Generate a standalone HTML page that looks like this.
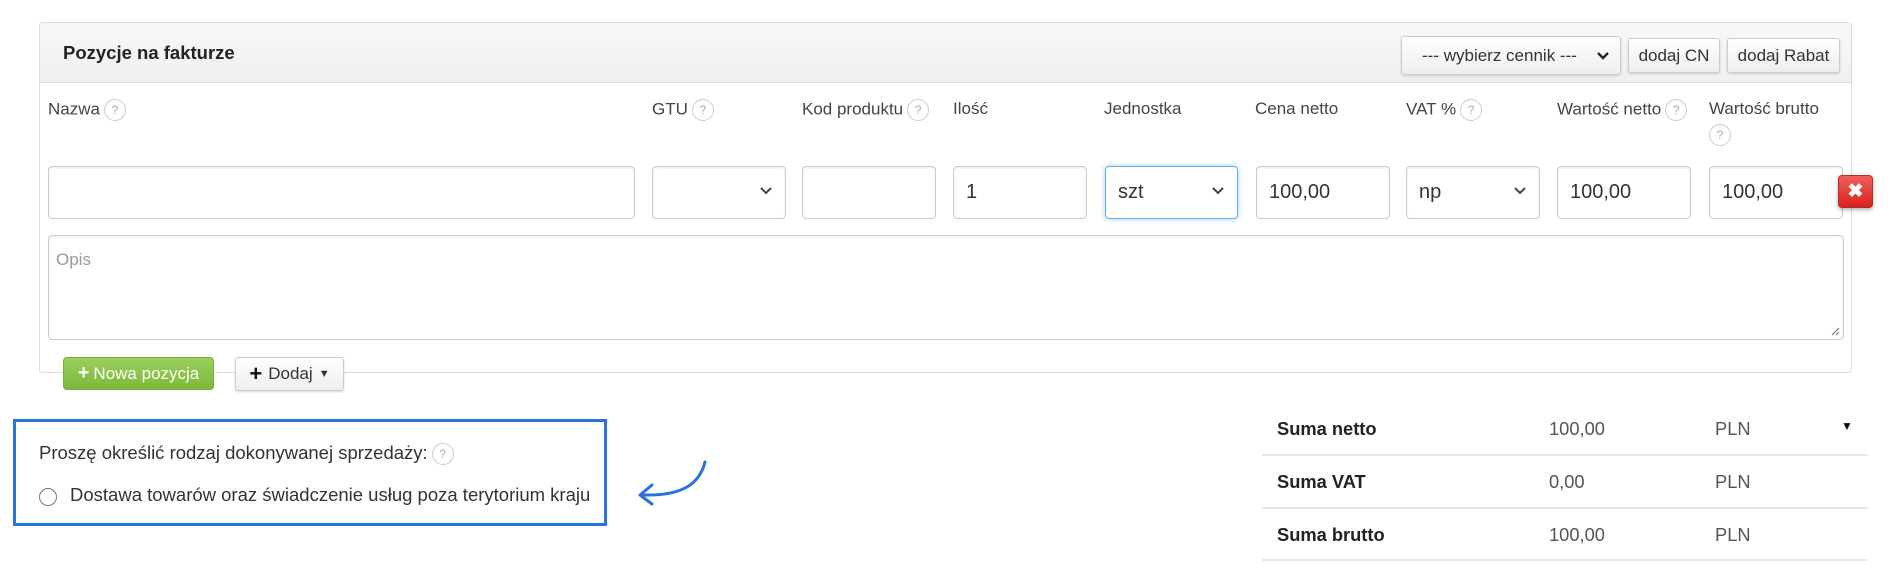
<!DOCTYPE html>
<html><head><meta charset="utf-8"><style>
*{box-sizing:border-box}
body{margin:0;width:1892px;height:576px;background:#fff;font-family:"Liberation Sans",Arial,sans-serif;color:#333;position:relative;overflow:hidden}
.a{position:absolute}
.panel{left:39px;top:22px;width:1813px;height:351px;border:1px solid #ddd;border-radius:3px}
.hdr{left:40px;top:23px;width:1811px;height:60px;background:linear-gradient(#f8f8f8,#efefef);border-bottom:1px solid #ddd}
.btn{background:linear-gradient(#fff,#eee);border:1px solid #ccc;border-radius:3px;box-shadow:0 1px 2px rgba(0,0,0,.15);font-size:17px;color:#333;display:flex;align-items:center;justify-content:center}
.lbl{font-size:17px;color:#444;top:99px}
.q{display:inline-block;width:22px;height:22px;border:1px solid #ccc;border-radius:50%;font-size:12px;color:#aaa;text-align:center;line-height:20px;vertical-align:middle;margin-left:4px}
.in{top:166px;height:53px;border:1px solid #ccc;border-radius:4px;box-shadow:inset 0 1px 2px rgba(0,0,0,.08);font-size:20px;padding-left:12px;display:flex;align-items:center;color:#333}
.chev{position:absolute;right:12px;top:19px;width:14px;height:10px}
.sum{font-size:18.3px}
.line{height:2px;background:#e6e6e6;left:1262px;width:606px}
</style></head><body>
<div class="a panel"></div>
<div class="a hdr"></div>
<div class="a" style="left:63px;top:42px;font-size:18.5px;font-weight:bold;color:#222">Pozycje na fakturze</div>
<div class="a btn" style="left:1401px;top:36px;width:220px;height:39px;justify-content:flex-start;padding-left:20px">--- wybierz cennik ---<svg style="position:absolute;right:10px;top:14px" width="14" height="10" viewBox="0 0 14 10"><path d="M2 2l5 5 5-5" stroke="#222" stroke-width="2.4" fill="none"/></svg></div>
<div class="a btn" style="left:1628px;top:38px;width:92px;height:35px">dodaj CN</div>
<div class="a btn" style="left:1727px;top:38px;width:113px;height:35px">dodaj Rabat</div>

<div class="a lbl" style="left:48px">Nazwa<span class="q">?</span></div>
<div class="a lbl" style="left:652px">GTU<span class="q">?</span></div>
<div class="a lbl" style="left:802px">Kod produktu<span class="q">?</span></div>
<div class="a lbl" style="left:953px">Ilość</div>
<div class="a lbl" style="left:1104px">Jednostka</div>
<div class="a lbl" style="left:1255px">Cena netto</div>
<div class="a lbl" style="left:1406px">VAT %<span class="q">?</span></div>
<div class="a lbl" style="left:1557px">Wartość netto<span class="q">?</span></div>
<div class="a lbl" style="left:1709px">Wartość brutto</div>
<div class="a" style="left:1709px;top:124px"><span class="q" style="margin:0">?</span></div>

<div class="a in" style="left:48px;width:587px"></div>
<div class="a in" style="left:652px;width:134px"><svg class="chev" viewBox="0 0 14 10"><path d="M2 2l5 5 5-5" stroke="#444" stroke-width="2" fill="none"/></svg></div>
<div class="a in" style="left:802px;width:134px"></div>
<div class="a in" style="left:953px;width:134px">1</div>
<div class="a in" style="left:1105px;width:133px;border-color:#66afe9;box-shadow:0 0 6px rgba(102,175,233,.6)">szt<svg class="chev" viewBox="0 0 14 10"><path d="M2 2l5 5 5-5" stroke="#444" stroke-width="2" fill="none"/></svg></div>
<div class="a in" style="left:1256px;width:134px">100,00</div>
<div class="a in" style="left:1406px;width:134px">np<svg class="chev" viewBox="0 0 14 10"><path d="M2 2l5 5 5-5" stroke="#444" stroke-width="2" fill="none"/></svg></div>
<div class="a in" style="left:1557px;width:134px">100,00</div>
<div class="a in" style="left:1709px;width:134px">100,00</div>
<div class="a" style="left:1838px;top:175px;width:35px;height:33px;background:linear-gradient(#ee5f5b,#d9231c);border:1px solid #b52b27;border-radius:4px;box-shadow:0 2px 4px rgba(0,0,0,.3);color:#fff;font-weight:bold;font-size:19px;text-align:center;line-height:31px">✖</div>

<div class="a" style="left:48px;top:235px;width:1796px;height:105px;border:1px solid #ccc;border-radius:4px;box-shadow:inset 0 1px 2px rgba(0,0,0,.08)"></div>
<div class="a" style="left:56px;top:250px;font-size:17px;color:#999">Opis</div>
<svg class="a" style="left:1830px;top:326px" width="10" height="10"><path d="M9 2L2 9M9 6L6 9" stroke="#777" stroke-width="1.2"/></svg>

<div class="a" style="left:63px;top:357px;width:151px;height:33px;background:linear-gradient(#9ccf5a,#7db83d);border:1px solid #78ad3a;border-radius:4px;color:#fff;font-size:17px;display:flex;align-items:center;justify-content:center"><b style="font-size:20px;margin-right:4px">+</b>Nowa pozycja</div>
<div class="a btn" style="left:235px;top:357px;width:109px;height:34px"><b style="font-size:22px;margin-right:6px;color:#111">+</b>Dodaj<span style="font-size:11px;margin-left:6px">▼</span></div>

<div class="a" style="left:13px;top:419px;width:594px;height:107px;border:3px solid #2a72e0"></div>
<div class="a" style="left:39px;top:442px;font-size:18.5px;color:#333">Proszę określić rodzaj dokonywanej sprzedaży:<span class="q">?</span></div>
<div class="a" style="left:39px;top:488px;width:18px;height:18px;border:1.5px solid #777;border-radius:50%"></div>
<div class="a" style="left:70px;top:484px;font-size:18.5px;color:#333">Dostawa towarów oraz świadczenie usług poza terytorium kraju</div>
<svg class="a" style="left:630px;top:460px" width="80" height="48" viewBox="0 0 80 48"><path d="M75 2C70 22 55 36 14 35" stroke="#2a72e0" stroke-width="3" fill="none" stroke-linecap="round"/><path d="M22 25L10 35L22 44" stroke="#2a72e0" stroke-width="3" fill="none" stroke-linecap="round" stroke-linejoin="round"/></svg>

<div class="a sum" style="left:1277px;top:418px;font-weight:bold;color:#222">Suma netto</div>
<div class="a sum" style="left:1549px;top:418px;color:#555">100,00</div>
<div class="a sum" style="left:1715px;top:418px;color:#555">PLN</div>
<div class="a" style="left:1841px;top:419px;font-size:12px;color:#111">▼</div>
<div class="a line" style="top:454px"></div>
<div class="a sum" style="left:1277px;top:471px;font-weight:bold;color:#222">Suma VAT</div>
<div class="a sum" style="left:1549px;top:471px;color:#555">0,00</div>
<div class="a sum" style="left:1715px;top:471px;color:#555">PLN</div>
<div class="a line" style="top:507px"></div>
<div class="a sum" style="left:1277px;top:524px;font-weight:bold;color:#222">Suma brutto</div>
<div class="a sum" style="left:1549px;top:524px;color:#555">100,00</div>
<div class="a sum" style="left:1715px;top:524px;color:#555">PLN</div>
<div class="a line" style="top:559px"></div>
</body></html>
